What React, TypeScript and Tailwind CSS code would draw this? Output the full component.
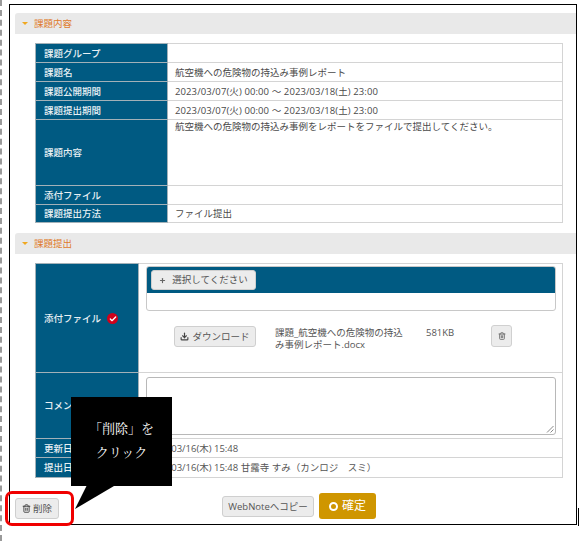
import { Download, Plus, Trash2, Check } from "lucide-react";

const TH = "bg-[#005a82] text-[#e8f0f4] border border-[#a3b1b8] px-[8px] pt-[1px] text-left font-medium align-middle";
const TD = "border border-[#d4d4d4] bg-white px-[7px] pt-[1px] text-[#4a4a4a] align-middle";

function SectionHeader({ title }: { title: string }) {
  return (
    <div className="ml-[5px] h-[21px] bg-[#e9e9e9] rounded-tl-[3px] flex items-center pl-[7px] gap-[6px] text-[#df7a2a]">
      <span className="w-0 h-0 border-x-[3px] border-x-transparent border-t-[3px] border-t-[#f0a820]" />
      <span className="text-[9.5px]">{title}</span>
    </div>
  );
}

export default function App() {
  return (
    <div
      className="relative w-[586px] h-[541px] bg-white overflow-hidden text-[9.5px] leading-[12px]"
      style={{ fontFamily: '"Open Sans", "Noto Sans CJK JP", sans-serif' }}
    >
      <div className="absolute left-0 top-0 bottom-0 border-l-2 border-dashed border-[#9a9a9a]" />
      <div className="absolute left-[578px] top-[508px] w-px h-[18px] bg-black" />

      <div className="ml-[9px] mt-[4px] w-[568px] h-[521px] border border-black pt-[8px] flex flex-col">
        <SectionHeader title="課題内容" />
        <table className="ml-[25px] mt-[9px] w-[528px] border-collapse table-fixed">
          <colgroup>
            <col className="w-[132px]" />
            <col />
          </colgroup>
          <tbody>
            <tr className="h-[19px]"><th className={TH}>課題グループ</th><td className={TD}></td></tr>
            <tr className="h-[19px]"><th className={TH}>課題名</th><td className={TD}>航空機への危険物の持込み事例レポート</td></tr>
            <tr className="h-[19px]"><th className={TH}>課題公開期間</th><td className={`${TD} tracking-[0.1px]`}>2023/03/07(火) 00:00 ～ 2023/03/18(土) 23:00</td></tr>
            <tr className="h-[19px]"><th className={TH}>課題提出期間</th><td className={`${TD} tracking-[0.1px]`}>2023/03/07(火) 00:00 ～ 2023/03/18(土) 23:00</td></tr>
            <tr className="h-[66px]"><th className={TH}>課題内容</th><td className={`${TD} !align-top`}>航空機への危険物の持込み事例をレポートをファイルで提出してください。</td></tr>
            <tr className="h-[19px]"><th className={TH}>添付ファイル</th><td className={TD}></td></tr>
            <tr className="h-[18px]"><th className={TH}>課題提出方法</th><td className={TD}>ファイル提出</td></tr>
          </tbody>
        </table>

        <div className="mt-[10px]"><SectionHeader title="課題提出" /></div>

        <table className="ml-[25px] mt-[9px] w-[528px] border-collapse table-fixed">
          <colgroup>
            <col className="w-[103px]" />
            <col />
          </colgroup>
          <tbody>
            <tr className="h-[109px]">
              <th className={TH}>
                <span className="inline-flex items-center gap-[6px]">
                  添付ファイル
                  <span className="w-[11px] h-[11px] rounded-full bg-[#d0021b] flex items-center justify-center">
                    <Check size={8} strokeWidth={4} className="text-white" />
                  </span>
                </span>
              </th>
              <td className={`${TD} !px-[7px] !align-top !pt-[2px]`}>
                <div className="border border-[#c8c8c8] rounded-[3px] h-[45px] overflow-hidden w-[410px]">
                  <div className="h-[26px] bg-[#005a82] flex items-center pl-[4px]">
                    <div className="h-[20px] w-[105px] bg-[#ececec] border border-[#cfcfcf] rounded-[3px] flex items-center justify-center gap-[6px] text-[#555]">
                      <Plus size={7} strokeWidth={4} className="text-[#666]" />
                      選択してください
                    </div>
                  </div>
                </div>
                <div className="flex mt-[15px] ml-[28px]">
                  <div className="h-[21px] w-[82px] bg-[#ececec] border border-[#cfcfcf] rounded-[3px] flex items-center justify-center gap-[3px] text-[#555]">
                    <Download size={9} strokeWidth={3} className="text-[#444]" />
                    ダウンロード
                  </div>
                  <div className="ml-[19px] w-[128px] text-[#555] leading-[12px] pt-[1px]">課題_航空機への危険物の持込み事例レポート.docx</div>
                  <div className="ml-[23px] w-[42px] pt-[1px] text-[#555]">581KB</div>
                  <div className="ml-[23px] -mt-[1px] w-[21px] h-[22px] bg-[#ececec] border border-[#d0d0d0] rounded-[3px] flex items-center justify-center">
                    <Trash2 size={8} strokeWidth={3} className="text-[#777]" />
                  </div>
                </div>
              </td>
            </tr>
            <tr className="h-[66px]">
              <th className={TH}>コメント</th>
              <td className={`${TD} !py-[3px]`}>
                <div className="relative h-[58px] w-[410px] border border-[#b8b8b8] rounded-[3px] bg-white">
                  <svg className="absolute right-[1px] bottom-[1px]" width="8" height="8" viewBox="0 0 8 8">
                    <path d="M7.5 1 L1 7.5 M7.5 4.5 L4.5 7.5" stroke="#888" strokeWidth="1" fill="none" />
                  </svg>
                </div>
              </td>
            </tr>
            <tr className="h-[19px]"><th className={TH}>更新日時</th><td className={`${TD} text-[#555]`}>2023/03/16(木) 15:48</td></tr>
            <tr className="h-[20px]"><th className={TH}>提出日時</th><td className={`${TD} text-[#555]`}>2023/03/16(木) 15:48 甘露寺 すみ（カンロジ　スミ）</td></tr>
          </tbody>
        </table>

        <div className="relative mt-[15px] flex items-start">
          <div className="absolute left-[5px] top-[5px] h-[21px] w-[44px] bg-[#ececec] border border-[#cfcfcf] rounded-[3px] flex items-center justify-center gap-[2px] text-[#555]">
            <Trash2 size={9} strokeWidth={2.5} className="text-[#444]" />
            削除
          </div>
          <div className="ml-[212px] mt-[3px] h-[21px] w-[92px] bg-[#ececec] border border-[#cfcfcf] rounded-[3px] flex items-center justify-center text-[#555]">WebNoteへコピー</div>
          <div className="ml-[5px] h-[26px] w-[57px] bg-[#cf9600] rounded-[3px] flex items-center justify-center gap-[4px] text-white text-[12px]">
            <span className="w-[9px] h-[9px] rounded-full border-2 border-white" />
            確定
          </div>
        </div>
      </div>

      {/* Callout overlay */}
      <div
        className="absolute left-[71px] top-[397px] w-[101px] h-[89px] bg-black text-white flex flex-col items-center justify-center gap-[4px] pb-[4px] text-[13px] leading-[20px]"
        style={{ fontFamily: '"Noto Serif CJK JP", "Noto Sans CJK JP", serif' }}
      >
        <span>「削除」を</span>
        <span>クリック</span>
      </div>
      <svg className="absolute left-[70px] top-[484px]" width="46" height="26" viewBox="0 0 46 26">
        <path d="M17 1 L5 25 L44 2 Z" fill="#000" />
      </svg>
      {/* Red highlight */}
      <div className="absolute left-[5px] top-[491px] w-[69px] h-[35px] border-[3px] border-[#f00000] rounded-[7px]" />
    </div>
  );
}
